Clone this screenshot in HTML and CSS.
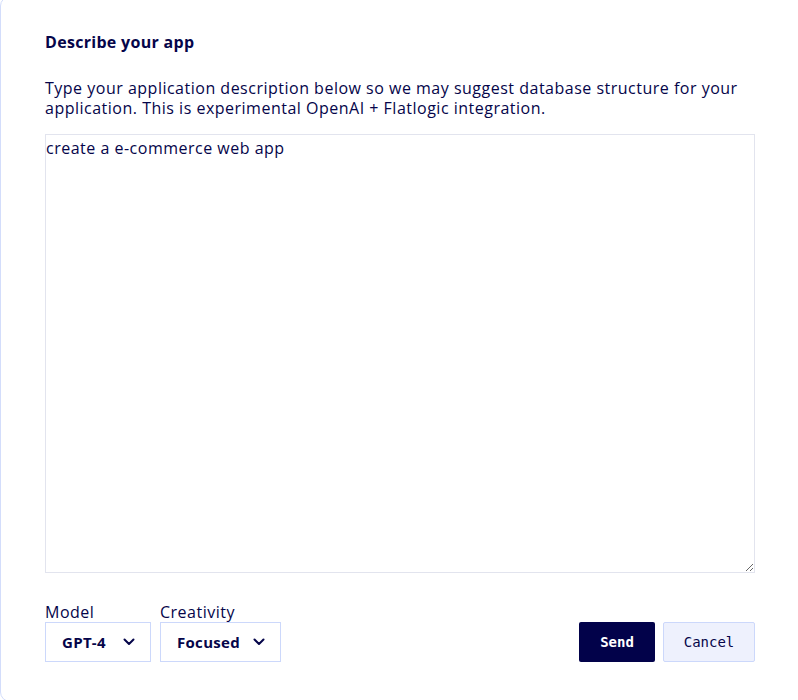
FILE: index.html
```html
<!DOCTYPE html>
<html lang="en">
<head>
  <meta charset="UTF-8">
  <meta name="viewport" content="width=device-width, initial-scale=1.0">
  <title>Describe your app</title>
  <link rel="stylesheet" href="styles.css">
</head>
<body>
  <div class="modal">
    <h2 class="title">Describe your app</h2>
    <p class="intro">Type your application description below so we may suggest database structure for your application. This is experimental OpenAI + Flatlogic integration.</p>

    <textarea class="prompt">create a e-commerce web app</textarea>

    <div class="footer">
      <div class="options">
        <div class="field">
          <label>Model</label>
          <div class="select select-model">
            <span>GPT-4</span>
            <svg width="12" height="8" viewBox="0 0 12 8"><path d="M1.5 1.5 6 6l4.5-4.5" fill="none" stroke="#05054a" stroke-width="2" stroke-linecap="round" stroke-linejoin="round"/></svg>
          </div>
        </div>
        <div class="field">
          <label>Creativity</label>
          <div class="select select-creativity">
            <span>Focused</span>
            <svg width="12" height="8" viewBox="0 0 12 8"><path d="M1.5 1.5 6 6l4.5-4.5" fill="none" stroke="#05054a" stroke-width="2" stroke-linecap="round" stroke-linejoin="round"/></svg>
          </div>
        </div>
      </div>

      <div class="actions">
        <button class="btn btn-send">Send</button>
        <button class="btn btn-cancel">Cancel</button>
      </div>
    </div>
  </div>
</body>
</html>
```

FILE: styles.css
```css
body {
  margin: 0;
  padding: 0;
  font-family: 'Open Sans', sans-serif;
  letter-spacing: 0.5px;
  background-color: #fff;
  color: #05054a;
  overflow: hidden;
}

.modal {
  box-sizing: border-box;
  width: 806px;
  height: 706px;
  margin-top: -4px;
  padding: 34px 0 0 44px;
  border: 1px solid #d3ddfb;
  border-radius: 10px;
  background-color: #fff;
}

.title {
  margin: 0;
  font-size: 16px;
  font-weight: 700;
  line-height: 22px;
  letter-spacing: 0.3px;
}

.intro {
  margin: 25px 0 0;
  width: 720px;
  font-size: 16px;
  line-height: 20px;
}

.prompt {
  display: block;
  box-sizing: border-box;
  width: 710px;
  height: 439px;
  margin-top: 16px;
  padding: 2px 0 0 0;
  border: 1px solid #e2e4ee;
  font-family: 'Open Sans', sans-serif;
  font-size: 16px;
  line-height: 22px;
  letter-spacing: 0.5px;
  color: #05054a;
  outline: none;
}

.footer {
  display: flex;
  justify-content: space-between;
  align-items: flex-end;
  width: 710px;
  margin-top: 29px;
}

.options {
  display: flex;
  gap: 9px;
}

.field label {
  display: block;
  font-size: 16px;
  line-height: 20px;
}

.select {
  box-sizing: border-box;
  display: flex;
  align-items: center;
  justify-content: space-between;
  height: 40px;
  padding: 0 15px 0 16px;
  border: 1px solid #ccd8fb;
  font-size: 15px;
  font-weight: 700;
  letter-spacing: 0.3px;
}

.select-model {
  width: 106px;
}

.select-creativity {
  width: 121px;
}

.actions {
  display: flex;
  gap: 8px;
}

.btn {
  box-sizing: border-box;
  height: 40px;
  border-radius: 2px;
  font-family: 'DejaVu Sans Mono', monospace;
  font-size: 14px;
  letter-spacing: 0;
  cursor: pointer;
}

.btn-send {
  width: 76px;
  border: none;
  background-color: #02024a;
  color: #fff;
  font-weight: 700;
}

.btn-cancel {
  width: 92px;
  border: 1px solid #ccd8fb;
  background-color: #eef1fd;
  color: #05054a;
}
```
